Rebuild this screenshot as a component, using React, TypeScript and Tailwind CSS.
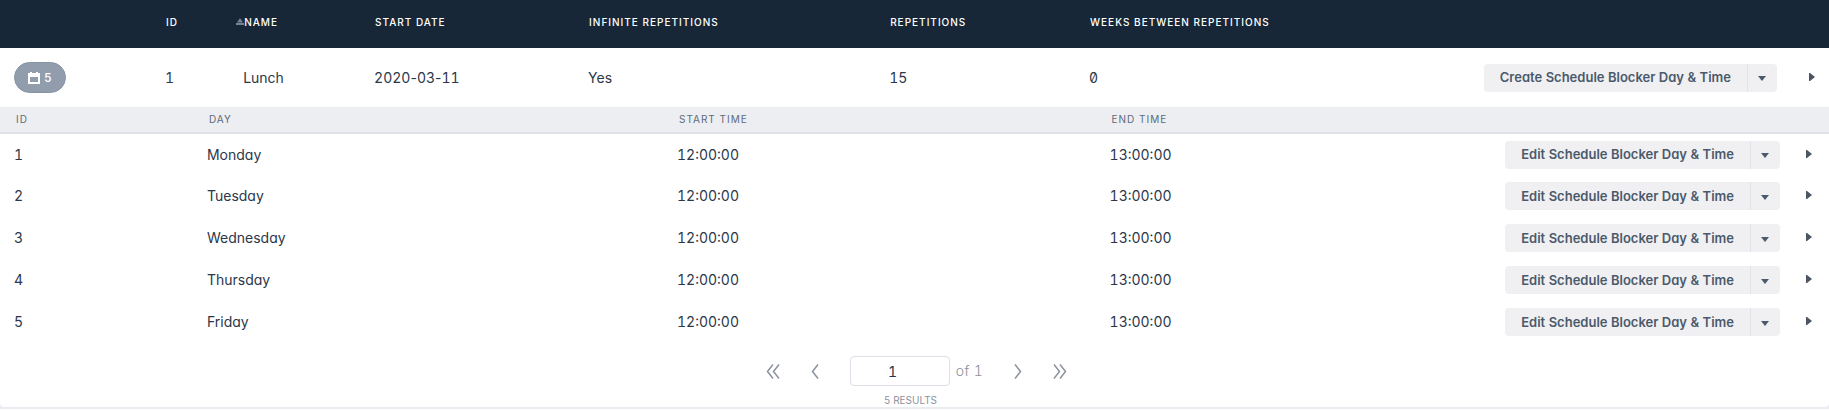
import { Fragment, useState } from 'react';

const days = [
	{ id: 1, day: 'Monday', start: '12:00:00', end: '13:00:00' },
	{ id: 2, day: 'Tuesday', start: '12:00:00', end: '13:00:00' },
	{ id: 3, day: 'Wednesday', start: '12:00:00', end: '13:00:00' },
	{ id: 4, day: 'Thursday', start: '12:00:00', end: '13:00:00' },
	{ id: 5, day: 'Friday', start: '12:00:00', end: '13:00:00' }
];

const headCell = 'px-[15px] pb-1 text-left text-[10px] font-medium uppercase tracking-widest';
const subHeadCell = 'px-4 text-left text-[10px] font-normal uppercase tracking-widest';
const cell = 'px-3.5 whitespace-nowrap';

// Tabular digits, but hyphens keep their normal width
function DateText({ value }: { value: string }) {
	return (
		<>
			{value.split('-').map((part, i) => (
				<Fragment key={i}>
					{i > 0 && <span className="[font-feature-settings:'cv11']">-</span>}
					{part}
				</Fragment>
			))}
		</>
	);
}

function SplitButton({ label }: { label: string }) {
	return (
		<div className="inline-flex h-7 overflow-hidden rounded bg-[#f0f0f3] align-middle text-[13px] font-semibold text-[#4b5a6b]">
			<button type="button" className="px-4 whitespace-nowrap">
				{label}
			</button>
			<button type="button" aria-label="More actions" className="flex w-[30px] items-center justify-center border-l border-[#e2e3e8] pt-0.5 pr-0.5">
				<svg width="8" height="5" viewBox="0 0 8 5" fill="currentColor">
					<path d="M0 0h8L4 5z" />
				</svg>
			</button>
		</div>
	);
}

function ExpandButton() {
	return (
		<button type="button" aria-label="Expand row" className="block pb-0.5 text-[#4b5563]">
			<svg width="6" height="8" viewBox="0 0 6 8" fill="currentColor">
				<path d="M0 0h1l5 4-5 4H0z" />
			</svg>
		</button>
	);
}

function Chevrons({ double, flip, label }: { double?: boolean; flip?: boolean; label: string }) {
	return (
		<button type="button" aria-label={label} className="flex w-[42px] justify-center">
			<svg
				width={double ? 14 : 8}
				height="15"
				viewBox={double ? '0 0 14 15' : '0 0 8 15'}
				fill="none"
				stroke="currentColor"
				strokeWidth="1.5"
				className={flip ? 'rotate-180' : ''}
			>
				<path d="M7 0.5L1.5 7.5L7 14.5" />
				{double && <path d="M13 0.5L7.5 7.5L13 14.5" />}
			</svg>
		</button>
	);
}

export default function App() {
	const [page, setPage] = useState('1');

	return (
		<div className="bg-[#ebecf1] pb-0.5 font-[Inter,sans-serif] text-sm text-[#2b374a] [font-feature-settings:'cv11','tnum']">
			<table className="w-full table-fixed bg-white">
				<colgroup>
					<col className="w-[8.26%]" />
					<col className="w-[4.27%]" />
					<col className="w-[7.16%]" />
					<col className="w-[11.7%]" />
					<col className="w-[16.46%]" />
					<col className="w-[10.93%]" />
					<col />
					<col className="w-[38px]" />
				</colgroup>
				<thead className="bg-[#172737] text-white">
					<tr className="h-12">
						<th aria-label="Days" />
						<th className={headCell}>ID</th>
						<th className={`relative ${headCell}`}>
							<svg width="8" height="7" viewBox="0 0 8 7" fill="#77828e" className="absolute top-[18px] left-[7px]">
								<path d="M4 0L7 4.5H1zM0 5h8v2H0z" />
							</svg>
							Name
						</th>
						<th className={headCell}>Start date</th>
						<th className={headCell}>Infinite repetitions</th>
						<th className={headCell}>Repetitions</th>
						<th className={headCell}>Weeks between repetitions</th>
						<th aria-label="Expand" />
					</tr>
				</thead>
				<tbody>
					<tr className="h-[59px]">
						<td className={cell}>
							<button type="button" className="flex h-[31px] w-[52px] items-center justify-center gap-1 rounded-full border border-[#8595a6] bg-[#919dad] text-xs font-medium text-white">
								<svg width="12" height="12" viewBox="0 0 12 12" fill="currentColor">
									<path fillRule="evenodd" d="M2 0h2v1h4V0h2v1h2v11H0V1h2zM2 5v5h8V5z" />
								</svg>
								5
							</button>
						</td>
						<td className={cell}>1</td>
						<td className={cell}>Lunch</td>
						<td className={cell}>
							<DateText value="2020-03-11" />
						</td>
						<td className={cell}>Yes</td>
						<td className={cell}>15</td>
						<td className={cell}>
							<div className="flex items-center justify-between">
								<span className="[font-feature-settings:'zero','tnum']">0</span>
								<SplitButton label="Create Schedule Blocker Day &amp; Time" />
							</div>
						</td>
						<td className="pl-[18px]">
							<ExpandButton />
						</td>
					</tr>
				</tbody>
			</table>

			<div className="rounded-b bg-white">
				<table className="w-full table-fixed">
					<colgroup>
						<col className="w-[10.55%]" />
						<col className="w-[25.7%]" />
						<col className="w-[23.65%]" />
						<col />
						<col className="w-[35px]" />
					</colgroup>
					<thead className="bg-[#edeef2] text-[#5d6b79]">
						<tr className="h-[26px] border-b-2 border-[#dfe2e7]">
							<th className={subHeadCell}>ID</th>
							<th className={subHeadCell}>Day</th>
							<th className={subHeadCell}>Start time</th>
							<th className={subHeadCell}>End time</th>
							<th aria-label="Expand" />
						</tr>
					</thead>
					<tbody>
						{days.map((d) => (
							<tr key={d.id} className="h-[42px]">
								<td className={cell}>{d.id}</td>
								<td className={cell}>{d.day}</td>
								<td className={cell}>{d.start}</td>
								<td className={cell}>
									<div className="flex items-center justify-between">
										{d.end}
										<SplitButton label="Edit Schedule Blocker Day &amp; Time" />
									</div>
								</td>
								<td className="pl-3">
									<ExpandButton />
								</td>
							</tr>
						))}
					</tbody>
				</table>

				<nav aria-label="Pagination" className="flex items-center justify-center pt-[13px] pl-1 text-[#8b929d]">
					<Chevrons double label="First page" />
					<Chevrons label="Previous page" />
					<label className="mx-3.5 flex items-center gap-1.5 font-light tracking-wide">
						<input
							aria-label="Page"
							value={page}
							onChange={(e) => setPage(e.target.value)}
							className="h-[30px] w-[100px] rounded border border-[#dfe0e7] bg-white pr-3.5 text-center font-normal text-[#25324a]"
						/>
						of 1
					</label>
					<Chevrons flip label="Next page" />
					<Chevrons double flip label="Last page" />
				</nav>
				<p className="pt-[7px] pr-2 text-center text-[10px] leading-[14px] text-[#8b929d] uppercase">5 results</p>
			</div>
		</div>
	);
}
